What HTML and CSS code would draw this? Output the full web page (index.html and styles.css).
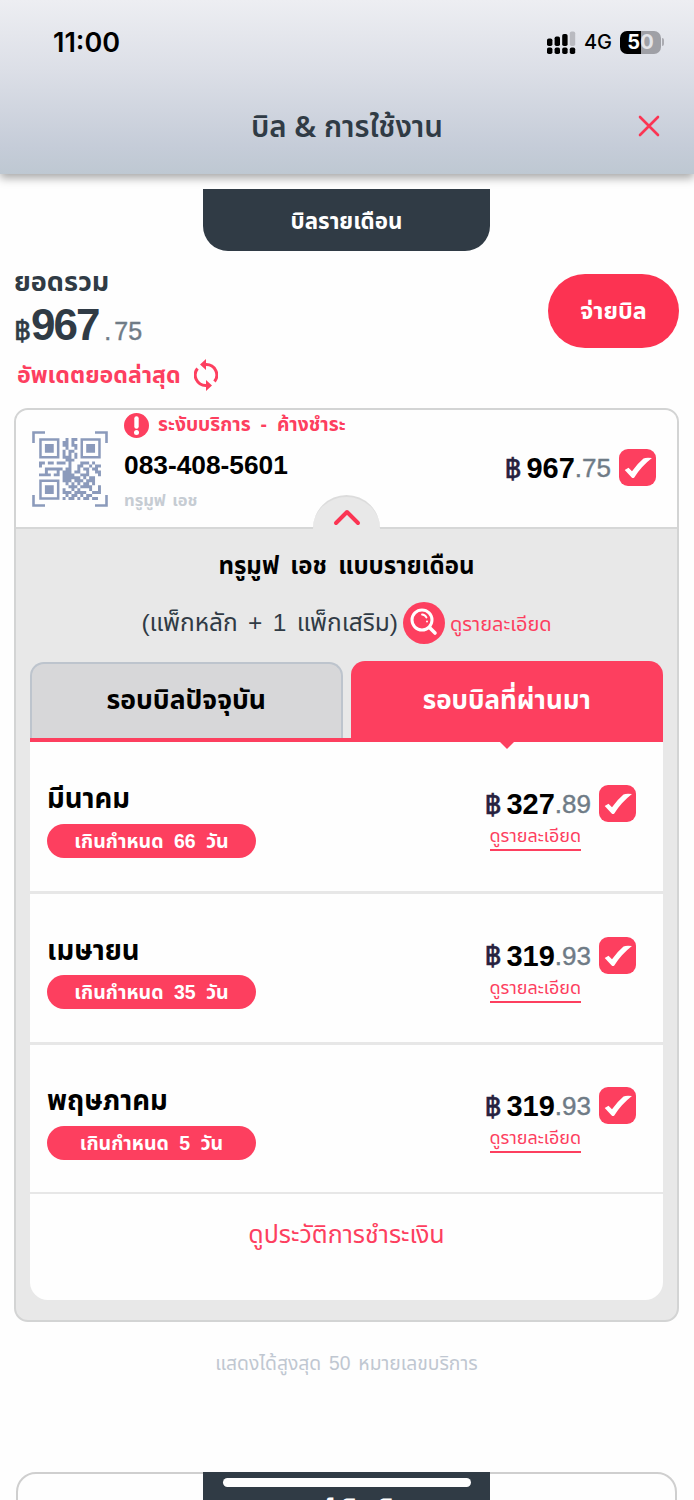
FILE: index.html
```
<!DOCTYPE html>
<html lang="th">

<head>
    <meta charset="UTF-8">
    <meta name="viewport" content="width=device-width, initial-scale=1.0">
    <title>บิล & การใช้งาน</title>
    <link rel="stylesheet" href="styles.css">
</head>

<body>
    <svg class="defs" width="0" height="0">
        <symbol id="check" viewBox="0 0 37 37">
            <rect width="37" height="37" rx="9" fill="#fd3f5f" />
            <path d="M5.700 21L9.500 18.700L13 22.200Q18 15 24.500 9.500Q27 8.300 33 9Q22 17.500 15.300 28.500Q14 29.500 12.700 28.500Z" fill="#fff" />
        </symbol>
    </svg>

    <header class="header">
        <div class="status-bar">
            <span class="time">11:00</span>
            <div class="status-icons">
                <svg width="29" height="24" viewBox="0 0 29 24">
                    <g fill="#000">
                        <rect x="0" y="8.500" width="5.400" height="7.500" rx="1.8" />
                        <rect x="7.600" y="6.500" width="5.400" height="9.500" rx="1.8" />
                        <rect x="15.200" y="4" width="5.400" height="12" rx="1.8" />
                        <rect x="0" y="17.500" width="5.400" height="6.500" rx="1.8" />
                        <rect x="7.600" y="17.500" width="5.400" height="6.500" rx="1.8" />
                        <rect x="15.200" y="17.500" width="5.400" height="6.500" rx="1.8" />
                        <rect x="22.800" y="17.500" width="5.400" height="6.500" rx="1.8" />
                    </g>
                    <rect x="22.800" y="1.500" width="5.400" height="14.500" rx="1.8" fill="#b9bac0" />
                </svg>
                <span class="network">4G</span>
                <div class="battery"><b>5</b><b>0</b></div>
                <i class="battery-tip"></i>
            </div>
        </div>
        <div class="title-bar">
            <h1>บิล &amp; การใช้งาน</h1>
            <svg class="close" width="22" height="22" viewBox="0 0 22 22">
                <path d="M2 2L20 20M20 2L2 20" stroke="#fb3553" stroke-width="2.6" stroke-linecap="round" />
            </svg>
        </div>
    </header>

    <main>
        <div class="section-tab">บิลรายเดือน</div>

        <section class="summary">
            <div>
                <div class="summary-label">ยอดรวม</div>
                <div class="summary-total"><span class="baht">฿</span><b>967</b><span class="dot">.</span><span class="cents">75</span></div>
                <div class="refresh">
                    <span>อัพเดตยอดล่าสุด</span>
                    <svg width="24" height="32" viewBox="0 0 24 32" fill="none" stroke="#fd3f5f" stroke-width="3">
                        <path d="M12 5.500A10.500 10.500 0 0 1 20.500 22.500" />
                        <path d="M12 26.500A10.500 10.500 0 0 1 3.500 9.500" />
                        <path d="M6 5.500L12 0V11ZM18 26.500L12 21V32Z" fill="#fd3f5f" stroke="none" />
                    </svg>
                </div>
            </div>
            <button class="pay-btn">จ่ายบิล</button>
        </section>

        <section class="card">
            <div class="card-head">
                <svg class="qr" width="76" height="76" viewBox="0 0 76 76">
                    <path d="M1.500 12V1.500H13M63 1.500H74.500V12M74.500 64V74.500H63M13 74.500H1.500V64" fill="none" stroke="#8b9abb" stroke-width="2.6" />
                    <g transform="translate(7 7) scale(2.95)" fill="none" stroke="#8b9abb">
                        <path d="M.5 .5h6v6h-6zM14.500 .5h6v6h-6zM.5 14.500h6v6h-6z" stroke-width=".85" />
                        <path d="M2 3.500h3M16 3.500h3M2 17.500h3" stroke-width="3" />
                        <path d="M9 .5h1M11 .5h2M8 1.500h2M11 1.500h1M8 2.500h2M11 2.500h2M9 3.500h1M12 3.500h1M8 4.500h1M10 4.500h2M8 5.500h1M10 5.500h1M12 5.500h1M8 6.500h3M12 6.500h1M9 7.500h3
                            M0 8.500h2M3 8.500h2M6 8.500h3M10 8.500h1M14 8.500h3M18 8.500h1M0 9.500h1M10 9.500h1M13 9.500h2M17 9.500h1M19 9.500h2M2 10.500h6M9 10.500h2M13 10.500h1M15 10.500h2M18 10.500h2
                            M2 11.500h1M6 11.500h1M8 11.500h3M12 11.500h2M16 11.500h1M19 11.500h2M0 12.500h4M5 12.500h2M8 12.500h3M11 12.500h1M14 12.500h3M20 12.500h1M8 13.500h6M15 13.500h1M17 13.500h2
                            M8 14.500h3M12 14.500h3M16 14.500h3M9 15.500h1M11 15.500h1M13 15.500h1M15 15.500h2M18 15.500h1M10 16.500h3M14 16.500h4M20 16.500h1M8 17.500h1M11 17.500h1M13 17.500h1M17 17.500h1M20 17.500h1
                            M8 18.500h3M12 18.500h4M18 18.500h3M9 19.500h1M11 19.500h2M14 19.500h1M16 19.500h2M8 20.500h1M10 20.500h2M13 20.500h1M15 20.500h2M18 20.500h2" />
                    </g>
                </svg>
                <div class="account">
                    <div class="suspended">
                        <svg width="25" height="25" viewBox="0 0 25 25">
                            <circle cx="12.500" cy="12.500" r="12.500" fill="#fd3f5f" />
                            <path d="M12.500 5.500V13.500" stroke="#fff" stroke-width="4.400" stroke-linecap="round" />
                            <circle cx="12.500" cy="19.500" r="2.500" fill="#fff" />
                        </svg>
                        <span>ระงับบริการ - ค้างชำระ</span>
                    </div>
                    <div class="phone">083-408-5601</div>
                    <div class="carrier">ทรูมูฟ เอช</div>
                </div>
                <div class="price card-price"><span class="baht">฿</span><b>967</b><span class="cents">.75</span>
                    <svg width="37" height="37"><use href="#check" /></svg>
                </div>
                <div class="collapse">
                    <svg width="28" height="18" viewBox="0 0 28 18">
                        <path d="M3 15L14 4L25 15" fill="none" stroke="#fb3553" stroke-width="4" stroke-linecap="round" stroke-linejoin="round" />
                    </svg>
                </div>
            </div>

            <div class="card-body">
                <h2>ทรูมูฟ เอช แบบรายเดือน</h2>
                <div class="package">
                    <span class="package-name">(แพ็กหลัก + 1 แพ็กเสริม)</span>
                    <svg width="42" height="42" viewBox="0 0 42 42" fill="none" stroke="#fff">
                        <circle cx="21" cy="21" r="21" fill="#fd3f5f" stroke="none" />
                        <circle cx="19" cy="18" r="10" stroke-width="3" />
                        <path d="M26.500 25.500L32 31" stroke-width="3.600" stroke-linecap="round" />
                        <path d="M19 12.500A5.500 5.500 0 0 1 23.500 15.500" stroke-width="1.800" stroke-linecap="round" />
                        <circle cx="24" cy="19.500" r="1" fill="#fff" stroke="none" />
                    </svg>
                    <span class="package-link">ดูรายละเอียด</span>
                </div>

                <div class="tabs">
                    <div class="tab">รอบบิลปัจจุบัน</div>
                    <div class="tab active">รอบบิลที่ผ่านมา</div>
                </div>

                <div class="bills">
                    <div class="bill">
                        <div>
                            <div class="month">มีนาคม</div>
                            <div class="overdue">เกินกำหนด 66 วัน</div>
                        </div>
                        <div>
                            <div class="price"><span class="baht">฿</span><b>327</b><span class="cents">.89</span>
                                <svg width="37" height="37"><use href="#check" /></svg>
                            </div>
                            <div class="detail-link"><span>ดูรายละเอียด</span></div>
                        </div>
                    </div>
                    <div class="bill">
                        <div>
                            <div class="month">เมษายน</div>
                            <div class="overdue">เกินกำหนด 35 วัน</div>
                        </div>
                        <div>
                            <div class="price"><span class="baht">฿</span><b>319</b><span class="cents">.93</span>
                                <svg width="37" height="37"><use href="#check" /></svg>
                            </div>
                            <div class="detail-link"><span>ดูรายละเอียด</span></div>
                        </div>
                    </div>
                    <div class="bill">
                        <div>
                            <div class="month">พฤษภาคม</div>
                            <div class="overdue">เกินกำหนด 5 วัน</div>
                        </div>
                        <div>
                            <div class="price"><span class="baht">฿</span><b>319</b><span class="cents">.93</span>
                                <svg width="37" height="37"><use href="#check" /></svg>
                            </div>
                            <div class="detail-link"><span>ดูรายละเอียด</span></div>
                        </div>
                    </div>
                    <div class="history">ดูประวัติการชำระเงิน</div>
                </div>
            </div>
        </section>

        <p class="note">แสดงได้สูงสุด 50 หมายเลขบริการ</p>

        <section class="next-card">
            <div class="next-tab">
                <div class="home-indicator"></div>
                <span>เบอร์เติมเงิน</span>
            </div>
        </section>
    </main>
</body>

</html>
```
FILE: styles.css
```
* {
    box-sizing: border-box;
}

body {
    margin: 0;
    height: 1500px;
    overflow: hidden;
    background-color: #fefefe;
    color: #000;
    font-family: "Liberation Sans", "Noto Sans Thai", "Noto Sans", sans-serif;
    white-space: nowrap;
}

main {
    width: 693px;
}

svg {
    display: block;
    flex-shrink: 0;
}

.defs {
    display: none;
}

/* Header */
.header {
    height: 174px;
    background: linear-gradient(#edeef2, #dcdfe7 40%, #c5ccd8 85%, #bec8d2);
    box-shadow: 0 4px 9px rgba(0, 0, 0, 0.35);
}

.status-bar {
    display: flex;
    justify-content: space-between;
    align-items: center;
    height: 84px;
    padding: 0 30px 0 53px;
}

.time {
    font-family: Inter, sans-serif;
    font-size: 27px;
    font-weight: 600;
}

.status-icons {
    display: flex;
    align-items: center;
}

.network {
    margin: 0 8px;
    font-family: Inter, sans-serif;
    font-size: 20px;
    font-weight: 500;
}

.battery {
    display: flex;
    justify-content: center;
    width: 41px;
    height: 23px;
    border-radius: 7px;
    background: linear-gradient(90deg, #000 50%, #9fa0a6 50%);
    color: #fff;
    font-family: Inter, sans-serif;
    font-size: 20px;
    line-height: 23px;
}

.battery b + b {
    color: #e3e4e8;
}

.battery-tip {
    width: 2px;
    height: 8px;
    margin-left: 1px;
    border-radius: 0 2px 2px 0;
    background-color: #aaabb1;
}

.title-bar {
    display: grid;
    grid-template-columns: 60px 1fr 60px;
    align-items: center;
    height: 84px;
}

.title-bar h1 {
    grid-column: 2;
    margin: 2px 0 0;
    color: #303b45;
    font-family: "Noto Sans", "Noto Sans Thai", sans-serif;
    font-size: 29.5px;
    font-weight: 600;
    text-align: center;
}

.close {
    margin-left: 4px;
}

/* Summary */
.section-tab {
    display: flex;
    justify-content: center;
    align-items: center;
    width: 287px;
    height: 62px;
    margin: 15px auto 0;
    padding-top: 4px;
    border-radius: 0 0 25px 25px;
    background-color: #303b45;
    color: #fff;
    font-size: 22.3px;
    font-weight: bold;
}

.summary {
    display: flex;
    justify-content: space-between;
    height: 157px;
    padding: 15px 14px 0;
}

.summary-label {
    height: 36px;
    color: #303b45;
    font-size: 27px;
    font-weight: bold;
    line-height: 32px;
}

.summary-total {
    display: flex;
    align-items: baseline;
    height: 55px;
    color: #303b45;
    line-height: 46px;
}

.summary-total .baht {
    font-size: 29px;
    -webkit-text-stroke: 0.5px;
}

.summary-total b {
    font-size: 44px;
    letter-spacing: -2px;
}

.summary-total .dot {
    margin: 0 3px 0 6px;
}

.summary-total .dot,
.summary-total .cents {
    color: #6f7b86;
    font-size: 25px;
    -webkit-text-stroke: 0.4px;
}

.refresh {
    display: flex;
    align-items: center;
    gap: 13px;
    padding-left: 3px;
    color: #fd3f5f;
    font-size: 23.2px;
    font-weight: bold;
    line-height: 36px;
}

.pay-btn {
    width: 131px;
    height: 74px;
    margin-top: 8px;
    border: none;
    border-radius: 37px;
    background-color: #fc3352;
    color: #fff;
    font-family: inherit;
    font-size: 23.3px;
    font-weight: bold;
}

/* Card */
.card {
    height: 914px;
    margin: 0 14px;
    border: 2px solid #d3d4d4;
    border-radius: 14px;
    background-color: #e8e8e8;
    overflow: hidden;
}

.card-head {
    position: relative;
    display: flex;
    height: 119px;
    padding: 0 21px 0 16px;
    border-bottom: 2px solid #d6d7d7;
    background-color: #fefefe;
}

.qr {
    margin-top: 21px;
}

.account {
    margin-left: 16px;
}

.suspended {
    display: flex;
    align-items: center;
    gap: 9px;
    height: 30px;
    color: #fd3f5f;
    font-size: 19.3px;
    font-weight: bold;
    word-spacing: 4.5px;
}

.phone {
    height: 46px;
    font-size: 26.3px;
    font-weight: bold;
    line-height: 50px;
}

.carrier {
    color: #c6ccd3;
    font-size: 16.5px;
    font-weight: bold;
    line-height: 28px;
    word-spacing: 2px;
}

.price {
    display: flex;
    align-items: center;
    height: 37px;
}

.price .baht {
    margin-right: 5px;
    color: #26213e;
    font-size: 29px;
    -webkit-text-stroke: 0.5px;
}

.price b {
    font-size: 29px;
}

.price .cents {
    margin-right: 8px;
    color: #6f7b86;
    font-size: 26px;
    -webkit-text-stroke: 0.4px;
}

.price b,
.price .baht,
.price .cents {
    padding-top: 2px;
}

.card-price {
    margin: 39px 0 0 auto;
}

.collapse {
    position: absolute;
    left: 297px;
    bottom: -2px;
    display: flex;
    justify-content: center;
    width: 67px;
    height: 34px;
    padding-top: 11px;
    border-top: 2px solid #dcdcdc;
    border-radius: 34px 34px 0 0;
    background-color: #e8e8e8;
}

.card-body {
    padding: 0 14px;
}

.card-body h2 {
    height: 73px;
    margin: 0;
    padding-top: 15px;
    font-size: 24px;
    line-height: 44px;
    text-align: center;
    word-spacing: 4.5px;
}

.package {
    display: flex;
    justify-content: center;
    align-items: center;
    gap: 5px;
    height: 42px;
}

.package-name {
    color: #303b45;
    font-size: 24.5px;
    word-spacing: 3.5px;
}

.package-link {
    padding-top: 4px;
    color: #fd3f5f;
    font-size: 20px;
}

.tabs {
    display: grid;
    grid-template-columns: 1fr 1fr;
    gap: 8px;
    height: 81px;
    margin-top: 17px;
    border-bottom: 4px solid #fd3f5f;
}

.tab {
    display: flex;
    justify-content: center;
    align-items: center;
    margin-top: 1px;
    border: 2px solid #bdc4cd;
    border-bottom: none;
    border-radius: 14px 14px 0 0;
    background-color: #d7d7d9;
    font-size: 26.5px;
    font-weight: bold;
}

.tab.active {
    position: relative;
    margin-top: 0;
    border-color: #fd3f5f;
    background-color: #fd3f5f;
    color: #fff;
    font-size: 26px;
}

.tab.active::after {
    content: "";
    position: absolute;
    left: 50%;
    bottom: -11px;
    margin-left: -8px;
    border: 8px solid transparent;
    border-top-color: #fd3f5f;
    border-bottom: none;
}

.bills {
    height: 558px;
    border-radius: 0 0 18px 18px;
    background-color: #fefefe;
}

.bill {
    display: flex;
    justify-content: space-between;
    height: 151.500px;
    padding: 43px 27px 0 17px;
    border-bottom: 3px solid #e7e7e7;
}

.bill:nth-child(3) {
    height: 149px;
    padding-top: 42px;
    border-bottom-width: 2px;
}

.month {
    height: 38.500px;
    font-size: 27.5px;
    font-weight: bold;
    line-height: 28px;
}

.overdue {
    width: 209px;
    height: 34px;
    border-radius: 17px;
    background-color: #fd3f5f;
    color: #fff;
    font-size: 19.5px;
    font-weight: bold;
    line-height: 34px;
    text-align: center;
    word-spacing: 5px;
}

.detail-link {
    padding-left: 5px;
}

.detail-link span {
    display: inline-block;
    height: 29px;
    border-bottom: 2px solid #fd3f5f;
    color: #fd3f5f;
    font-size: 18px;
    line-height: 29px;
}

.history {
    color: #fd3f5f;
    font-size: 25px;
    line-height: 80px;
    text-align: center;
}

.note {
    height: 84px;
    margin: 0;
    color: #c0c7d1;
    font-size: 19.3px;
    line-height: 83px;
    text-align: center;
    word-spacing: 2.5px;
}

/* Next section, cut off by the viewport */
.next-card {
    height: 90px;
    margin: 66px 16px 0;
    border: 2px solid #cfcfcf;
    border-radius: 20px;
}

.next-tab {
    width: 287px;
    height: 62px;
    margin: -2px auto 0;
    padding-top: 6px;
    background-color: #303b45;
    color: #fff;
    font-size: 24px;
    font-weight: bold;
    line-height: 36px;
    text-align: center;
}

.home-indicator {
    width: 248px;
    height: 9px;
    margin: 0 auto 4px;
    border-radius: 5px;
    background-color: #fefefe;
}
```
